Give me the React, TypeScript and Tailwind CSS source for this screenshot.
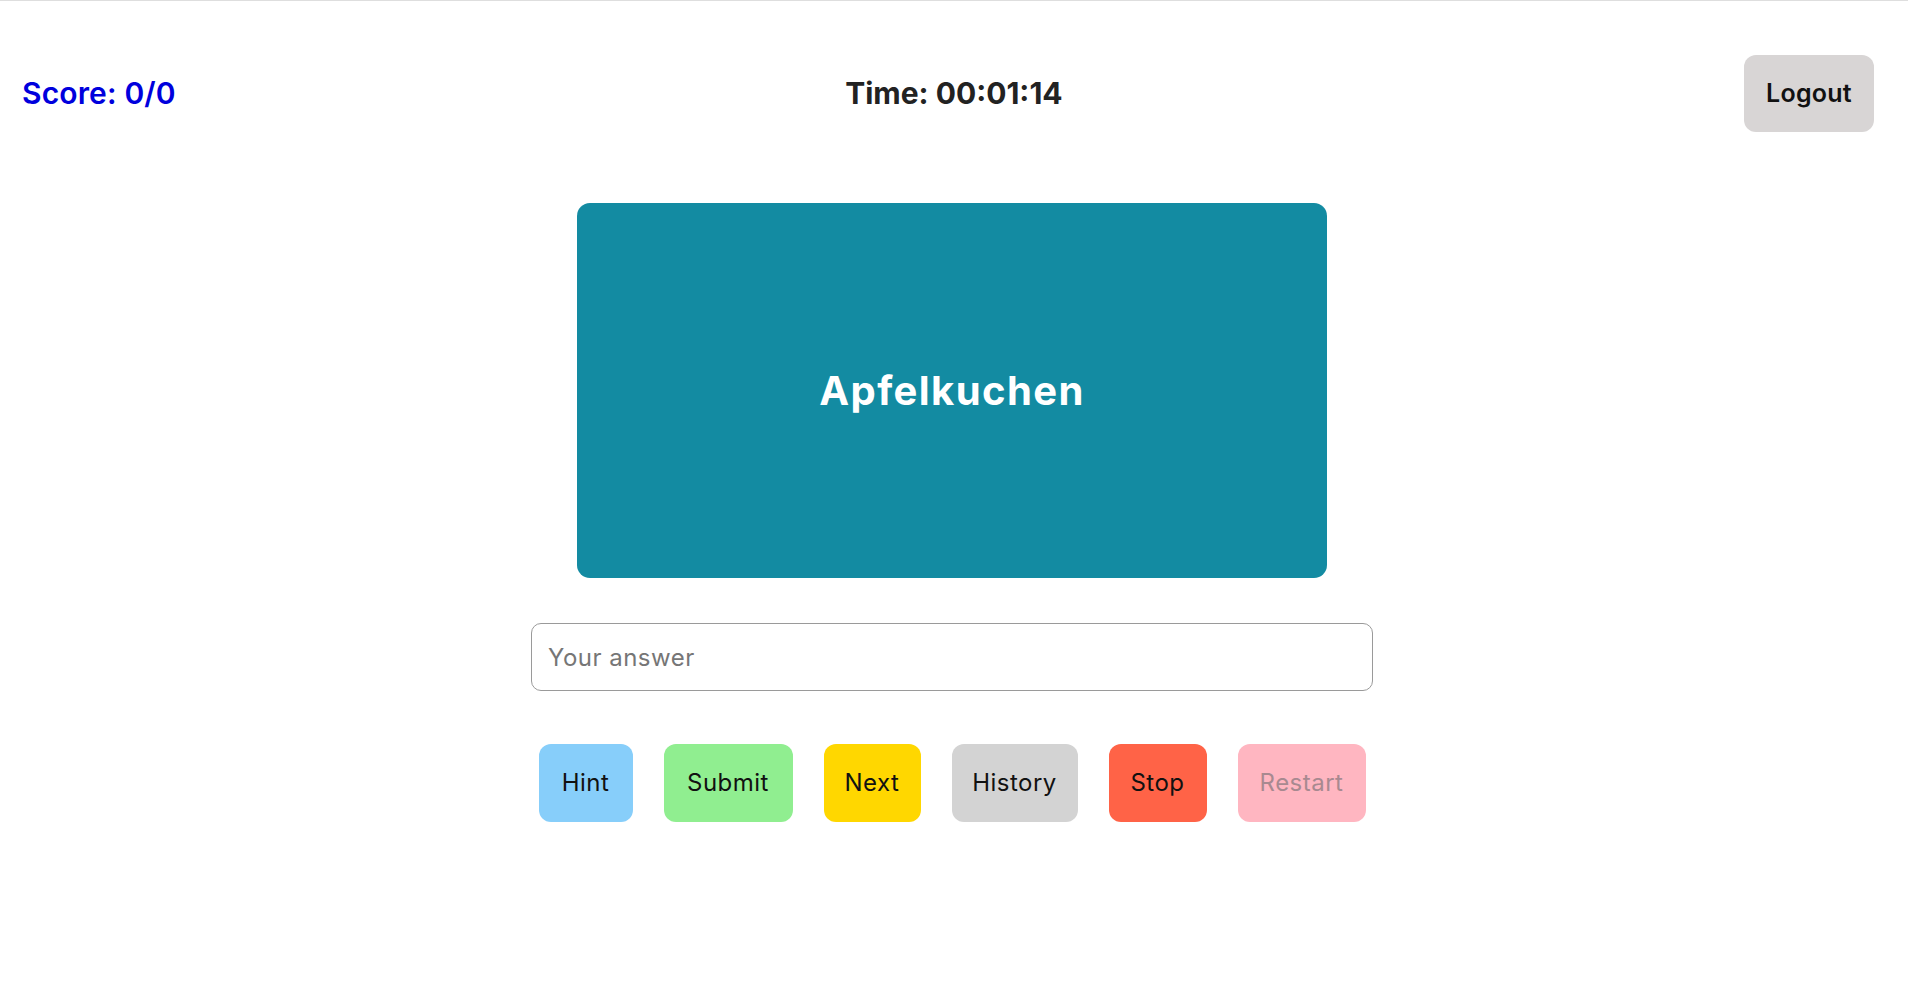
import React from "react";

const buttons = [
  { label: "Hint", cls: "w-[94px] bg-[#87cefa] text-[#111]" },
  { label: "Submit", cls: "w-[129px] bg-[#90ee90] text-[#111]" },
  { label: "Next", cls: "w-[97px] bg-[#ffd700] text-[#111]" },
  { label: "History", cls: "w-[126px] bg-[#d3d3d3] text-[#111]" },
  { label: "Stop", cls: "w-[98px] bg-[#ff6347] text-[#111]" },
  { label: "Restart", cls: "w-[128px] bg-[#ffb6c1] text-[#a88990]" },
];

const App = () => {
  return (
    <div
      className="min-h-[994px] w-full bg-white border-t border-[#dedede]"
      style={{ fontFamily: "Inter, 'Liberation Sans', sans-serif" }}
    >
      {/* top bar */}
      <header className="flex items-center justify-between pt-[54px] pl-[22px] pr-[34px]">
        <h2 className="text-[30px] font-semibold text-[#0000dd] tracking-[0.005em]">Score: 0/0</h2>
        <h2 className="mr-[12px] text-[30px] font-bold text-[#222]">Time: 00:01:14</h2>
        <button className="w-[130px] h-[77px] rounded-[12px] bg-[#d8d5d5] text-[25px] font-semibold text-[#111] tracking-[0.01em]">
          Logout
        </button>
      </header>

      <main className="flex flex-col items-center pr-[4px]">
        {/* flashcard */}
        <div className="mt-[71px] w-[750px] h-[375px] rounded-[13px] bg-[#138ba2] flex items-center justify-center">
          <span className="text-[40px] font-bold text-white tracking-[0.035em]">Apfelkuchen</span>
        </div>

        <input
          type="text"
          placeholder="Your answer"
          className="mt-[45px] w-[842px] h-[68px] rounded-[10px] border border-[#9a9a9a] px-4 text-[24px] tracking-[0.02em] text-[#333] placeholder:text-[#767676] outline-none"
        />

        <div className="mt-[53px] flex gap-[31px]">
          {buttons.map((b) => (
            <button
              key={b.label}
              className={`h-[78px] rounded-[12px] text-[24px] tracking-[0.02em] ${b.cls}`}
            >
              {b.label}
            </button>
          ))}
        </div>
      </main>
    </div>
  );
};

export default App;
